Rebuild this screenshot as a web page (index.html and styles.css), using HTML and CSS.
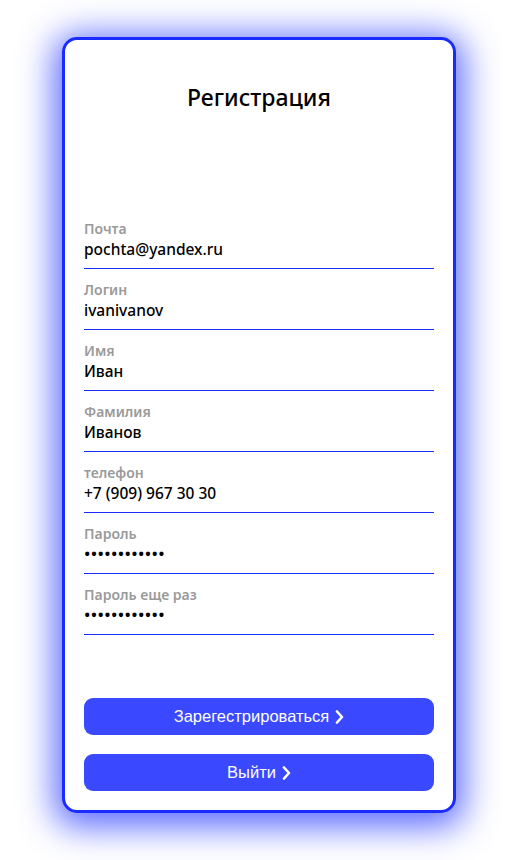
FILE: index.html
```html
<!DOCTYPE html>
<html lang="ru">
<head>
<meta charset="utf-8">
<title>Регистрация</title>
<link rel="stylesheet" href="styles.css">
</head>
<body>
<div class="card">
  <h1 class="title">Регистрация</h1>
  <div class="fields">
    <div class="field"><div class="label">Почта</div><div class="value">pochta@yandex.ru</div></div>
    <div class="field"><div class="label">Логин</div><div class="value">ivanivanov</div></div>
    <div class="field"><div class="label">Имя</div><div class="value">Иван</div></div>
    <div class="field"><div class="label">Фамилия</div><div class="value">Иванов</div></div>
    <div class="field"><div class="label">телефон</div><div class="value">+7 (909) 967 30 30</div></div>
    <div class="field"><div class="label">Пароль</div><div class="value dots">••••••••••••</div></div>
    <div class="field"><div class="label">Пароль еще раз</div><div class="value dots">••••••••••••</div></div>
  </div>
  <div class="buttons">
    <button class="btn">Зарегестрироваться <svg class="chev" width="9" height="14" viewBox="0 0 9 14"><polyline points="2,1.5 7,7 2,12.5" fill="none" stroke="#fff" stroke-width="2.6" stroke-linecap="round" stroke-linejoin="round"/></svg></button>
    <button class="btn">Выйти <svg class="chev" width="9" height="14" viewBox="0 0 9 14"><polyline points="2,1.5 7,7 2,12.5" fill="none" stroke="#fff" stroke-width="2.6" stroke-linecap="round" stroke-linejoin="round"/></svg></button>
  </div>
</div>
</body>
</html>
```
FILE: styles.css
```css
html, body {
  margin: 0;
  padding: 0;
  background: #fff;
}
body {
  min-height: 860px;
  box-sizing: border-box;
  padding: 37px 0 0 62px;
  font-family: "Noto Sans", "Open Sans", sans-serif;
}
.card {
  box-sizing: border-box;
  width: 394px;
  height: 776px;
  border: 3px solid #1a2bff;
  border-radius: 15px;
  background: #fff;
  padding: 0 19px;
  box-shadow: 0 6px 34px 8px rgba(40, 60, 255, 0.75);
  display: flex;
  flex-direction: column;
}
.title {
  margin: 41px 0 0;
  font-size: 23px;
  line-height: 32px;
  font-weight: 500;
  text-align: center;
  color: #000;
}
.fields {
  margin-top: 106px;
  display: flex;
  flex-direction: column;
  gap: 11px;
}
.field {
  border-bottom: 1px solid #1a2bff;
  padding-bottom: 9px;
}
.label {
  font-size: 14px;
  line-height: 20px;
  font-weight: 600;
  color: #9a9a9a;
}
.value {
  font-size: 15.5px;
  line-height: 20px;
  font-weight: 500;
  color: #000;
}
.dots {
  font-size: 17px;
  letter-spacing: 0.35px;
}
.buttons {
  margin-top: auto;
  margin-bottom: 19px;
  display: flex;
  flex-direction: column;
  gap: 19px;
}
.btn {
  height: 37px;
  border: none;
  border-radius: 9px;
  background: #3a48ff;
  color: #fff;
  font-family: "Liberation Sans", Arial, sans-serif;
  font-size: 16.5px;
  display: flex;
  align-items: center;
  justify-content: center;
  gap: 6px;
  padding: 0;
}
.chev {
  display: block;
}
```
